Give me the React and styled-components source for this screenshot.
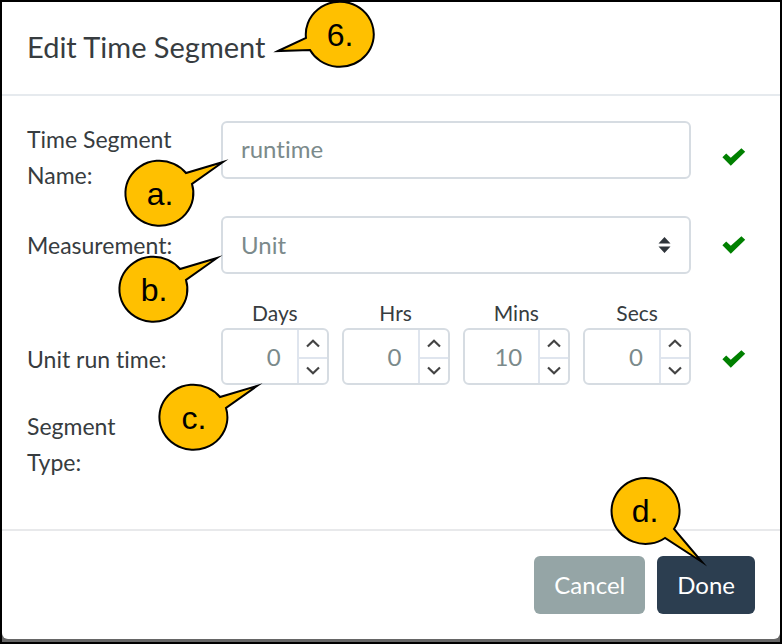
import React, { useState } from "react";
import styled, { createGlobalStyle } from "styled-components";

const GlobalStyle = createGlobalStyle`
  *, *::before, *::after { box-sizing: border-box; }
  body {
    margin: 0;
    background: #666;
    color: #373c40;
    font-family: Lato, sans-serif;
    font-size: 24px;
    line-height: 36px;
    font-variant-ligatures: none;
  }
  button, input, select { font: inherit; font-variant-ligatures: none; }
`;

const Frame = styled.main`
  display: flex;
  flex-direction: column;
  min-height: 100vh;
  padding-bottom: 3px;
  border: 2px solid #000;
`;

const Dialog = styled.form`
  flex: 1;
  display: flex;
  flex-direction: column;
  background: #fff;
  border-radius: 0 0 6px 6px;
`;

const Header = styled.header`
  display: flex;
  padding: 24px 25px 26px;
  border-bottom: 2px solid #e6eaee;
`;

const Title = styled.h1`
  margin: 0;
  font-size: 29px;
  line-height: 42px;
  font-weight: 400;
`;

const Body = styled.div`
  flex: 1;
  display: flex;
  flex-direction: column;
  gap: 23px;
  padding: 25px 25px 47px;
`;

const Row = styled.div`
  display: grid;
  grid-template-columns: 194px minmax(0, 1fr) 64px;
  align-items: ${(p) => p.$align || "center"};
`;

const Label = styled.label`
  max-width: 160px;
  font-size: 23px;
`;

const Field = styled.div`
  position: relative;
`;

const Anchor = styled.div`
  position: relative;
`;

const TextInput = styled.input`
  display: block;
  width: 100%;
  height: 58px;
  padding: 0 18px 3px;
  border: 2px solid #d6dce2;
  border-radius: 6px;
  background: #fff;
  color: #7b8a8b;
  outline: none;
`;

const Select = styled.select`
  display: block;
  width: 100%;
  height: 58px;
  padding: 0 18px;
  border: 2px solid #d6dce2;
  border-radius: 6px;
  background: #fff;
  color: #7b8a8b;
  appearance: none;
  outline: none;
`;

const SelectArrows = styled.svg`
  position: absolute;
  right: 20px;
  top: 21px;
  pointer-events: none;
`;

const CheckCell = styled.div`
  display: flex;
  justify-content: flex-end;
  align-self: ${(p) => (p.$low ? "end" : "center")};
  padding: ${(p) => (p.$low ? "0 9px 17px 0" : "0 9px 0 0")};
`;

const Units = styled.div`
  display: grid;
  grid-template-columns: repeat(4, minmax(0, 1fr));
  column-gap: 13px;
`;

const Unit = styled.div`
  display: flex;
  flex-direction: column;
`;

const UnitLabel = styled.label`
  padding-top: 1px;
  font-size: 21px;
  line-height: 30px;
  text-align: center;
`;

const Stepper = styled.div`
  display: grid;
  grid-template-columns: minmax(0, 1fr) 30px;
  height: 57px;
  border: 2px solid #d6dce2;
  border-radius: 6px;
  background: #fff;
`;

const NumberInput = styled.input`
  width: 100%;
  padding: 0 16px 0 0;
  border: 0;
  background: transparent;
  color: #7b8a8b;
  text-align: right;
  outline: none;
  appearance: textfield;
  &::-webkit-inner-spin-button { appearance: none; margin: 0; }
`;

const StepButtons = styled.div`
  display: grid;
  grid-template-rows: 1fr 1fr;
  border-left: 2px solid #dfe5ee;
`;

const StepButton = styled.button`
  display: flex;
  align-items: center;
  justify-content: center;
  padding: 0;
  border: 0;
  background: transparent;
  color: #444;
  & + & { border-top: 2px solid #dfe5ee; }
`;

const Footer = styled.footer`
  display: flex;
  justify-content: flex-end;
  gap: 12px;
  padding: 25px 25px;
  border-top: 2px solid #e8e9eb;
`;

const Button = styled.button`
  height: 58px;
  padding: 0 20px;
  border: 0;
  border-radius: 6px;
  color: #fff;
  background: ${(p) => (p.$primary ? "#2c3e50" : "#95a5a6")};
`;

const CalloutPoint = styled.div`
  position: absolute;
  z-index: 1;
  left: ${(p) => p.$left};
  top: ${(p) => p.$top};
  width: 0;
  height: 0;
  pointer-events: none;
`;

const CalloutArt = styled.svg`
  display: block;
  overflow: visible;
  font-family: "Liberation Sans", Arial, sans-serif;
  font-size: 32px;
`;

/* Bubble outlines are drawn with the visible tip of the pointer at 0,0. */
const bubbles = {
  left: { cx: 67, cy: -17, d: "M5 -1 L33 -14 A34 32.5 0 1 1 37 -2 Z" },
  upRight: { cx: -68, cy: 35, d: "M-5 3 L-42 14 A34 32.5 0 1 0 -36 25 Z" },
  downRight: { cx: -61, cy: -55, d: "M-4 -4 L-41 -28 A34 33 0 1 1 -32 -37 Z" },
};

function Callout({ shape, left, top, children }) {
  const b = bubbles[shape];
  return (
    <CalloutPoint $left={left} $top={top}>
      <CalloutArt width="1" height="1">
        <path d={b.d} fill="#ffc000" stroke="#000" strokeWidth="2" strokeMiterlimit="12" />
        <text x={b.cx} y={b.cy + 11} textAnchor="middle" fill="#000">{children}</text>
      </CalloutArt>
    </CalloutPoint>
  );
}

function Check({ low }) {
  return (
    <CheckCell $low={low}>
      <svg width="24" height="18" viewBox="0 0 24 18" role="img" aria-label="Valid">
        <path d="M0.4 9.2 L4.2 5.6 L8.8 9.8 L19.4 0.2 L23.2 3.8 L8.8 17.8 Z" fill="#008000" />
      </svg>
    </CheckCell>
  );
}

function Chevron({ up }) {
  return (
    <svg width="14" height="9" viewBox="0 0 14 9" fill="none" stroke="currentColor" strokeWidth="2.2">
      <path d={up ? "M1 7.5 L7 1.8 L13 7.5" : "M1 1.5 L7 7.2 L13 1.5"} />
    </svg>
  );
}

function TimeUnit({ id, label, initial }) {
  const [value, setValue] = useState(initial);
  const step = (by) => setValue((v) => Math.max(0, Number(v) + by));
  return (
    <Unit>
      <UnitLabel htmlFor={id}>{label}</UnitLabel>
      <Stepper>
        <NumberInput id={id} type="number" min="0" value={value} onChange={(e) => setValue(e.target.value)} />
        <StepButtons>
          <StepButton type="button" aria-label={`Increase ${label}`} onClick={() => step(1)}><Chevron up /></StepButton>
          <StepButton type="button" aria-label={`Decrease ${label}`} onClick={() => step(-1)}><Chevron /></StepButton>
        </StepButtons>
      </Stepper>
    </Unit>
  );
}

const units = [
  { id: "days", label: "Days", initial: 0 },
  { id: "hrs", label: "Hrs", initial: 0 },
  { id: "mins", label: "Mins", initial: 10 },
  { id: "secs", label: "Secs", initial: 0 },
];

const RunTimeLabel = styled.div`
  align-self: end;
  padding-bottom: 8px;
  font-size: 23px;
`;

export default function App() {
  return (
    <Frame>
      <GlobalStyle />
      <Dialog onSubmit={(e) => e.preventDefault()}>
        <Header>
          <Anchor>
            <Title>Edit Time Segment</Title>
            <Callout shape="left" left="calc(100% + 8px)" top="26px">6.</Callout>
          </Anchor>
        </Header>
        <Body>
          <Row $align="start">
            <Label htmlFor="name">Time Segment Name:</Label>
            <Field>
              <TextInput id="name" type="text" defaultValue="runtime" />
              <Callout shape="upRight" left="7px" top="38px">a.</Callout>
            </Field>
            <Check />
          </Row>
          <Row>
            <Label htmlFor="measurement">Measurement:</Label>
            <Field>
              <Select id="measurement" defaultValue="Unit">
                <option>Unit</option>
              </Select>
              <SelectArrows width="13" height="16" viewBox="0 0 13 16" fill="#2f353b">
                <path d="M6.5 0 L12.5 6.5 H0.5 Z M0.5 9.5 H12.5 L6.5 16 Z" />
              </SelectArrows>
              <Callout shape="upRight" left="1px" top="39px">b.</Callout>
            </Field>
            <Check />
          </Row>
          <Row>
            <RunTimeLabel id="run-time">Unit run time:</RunTimeLabel>
            <Field role="group" aria-labelledby="run-time">
              <Units>
                {units.map((u) => <TimeUnit key={u.id} {...u} />)}
              </Units>
              <Callout shape="upRight" left="41px" top="86px">c.</Callout>
            </Field>
            <Check low />
          </Row>
          <Row>
            <Label as="div">Segment<br />Type:</Label>
          </Row>
        </Body>
        <Footer>
          <Button type="button">Cancel</Button>
          <Anchor>
            <Button type="submit" $primary>Done</Button>
            <Callout shape="downRight" left="50%" top="10px">d.</Callout>
          </Anchor>
        </Footer>
      </Dialog>
    </Frame>
  );
}
